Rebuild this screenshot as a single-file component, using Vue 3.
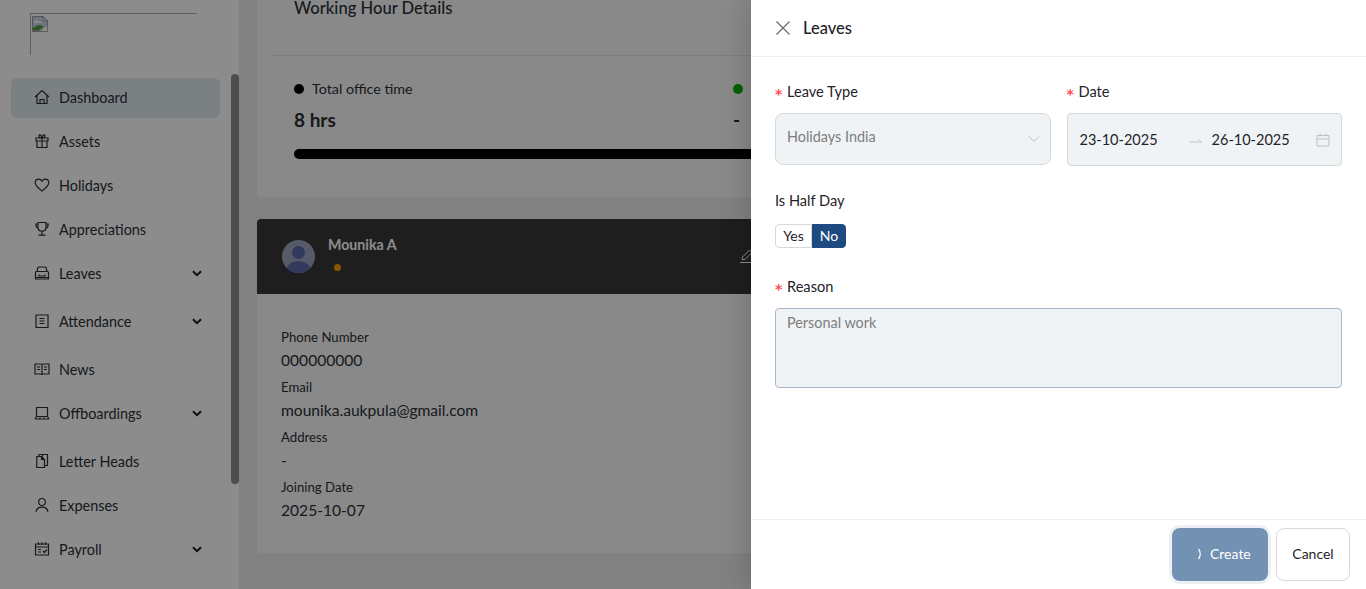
<template>
  <div class="page">
    <aside class="sidebar">
      <div class="logo">
        <svg class="broken" width="16" height="16" viewBox="0 0 16 16">
          <path d="M0.5 0.5H11L15.5 5V15.5H0.5Z" fill="#c6d5e8" stroke="#9a9a9a" />
          <path d="M2 6C3 4 5.5 4 6.5 5.5C8 5 9.5 5.5 10 7H2Z" fill="#fff" />
          <path d="M1 14.5V12L5.5 9.2C7.5 9 10 9.6 11.5 10.2L7 14.5Z" fill="#4e9a3a" />
          <path d="M15.5 8.5L8 15.5H15.5Z" fill="#fff" stroke="#9a9a9a" stroke-width="0.6" />
          <path d="M11 0.5V5H15.5Z" fill="#f2f2f2" stroke="#9a9a9a" />
        </svg>
      </div>
      <nav class="menu">
        <a
          v-for="item in menu"
          :key="item.label"
          class="menu-item"
          :class="{ active: item.active, 'has-sub': item.sub }"
        >
          <svg class="menu-icon" width="16" height="16" viewBox="0 0 16 16">
            <path :d="item.icon" />
          </svg>
          <span class="menu-label">{{ item.label }}</span>
          <svg v-if="item.sub" class="caret" width="10" height="7" viewBox="0 0 10 7">
            <path d="M1 1.2L5 5.2L9 1.2" />
          </svg>
        </a>
      </nav>
      <div class="thumb"></div>
    </aside>

    <main class="content">
      <section class="card hours">
        <h3 class="hours-title">Working Hour Details</h3>
        <div class="hours-line"></div>
        <div class="stats">
          <div class="stat">
            <div class="stat-label"><i class="dot black"></i>Total office time</div>
            <div class="stat-value">8 hrs</div>
          </div>
          <div class="stat">
            <div class="stat-label"><i class="dot green"></i>Working</div>
            <div class="stat-value">-</div>
          </div>
        </div>
        <div class="bar"></div>
      </section>

      <section class="card profile">
        <div class="profile-head">
          <svg class="avatar" width="33" height="33" viewBox="0 0 33 33">
            <defs>
              <clipPath id="avatarClip"><circle cx="16.5" cy="16.5" r="16.5" /></clipPath>
            </defs>
            <circle cx="16.5" cy="16.5" r="16.5" fill="#9ea5bd" />
            <g clip-path="url(#avatarClip)" fill="#5b68ae">
              <circle cx="16.5" cy="12.5" r="6.5" />
              <ellipse cx="16.5" cy="30" rx="12" ry="9" />
            </g>
          </svg>
          <div>
            <div class="profile-name">Mounika A</div>
            <i class="status"></i>
          </div>
          <svg class="edit" width="16" height="16" viewBox="0 0 16 16">
            <path d="M1 14.5H14M3 11.5L3.5 9L10.5 2L13 4.5L6 11.5Z" />
          </svg>
        </div>
        <div class="profile-body">
          <div v-for="row in details" :key="row.label" class="detail">
            <div class="detail-label">{{ row.label }}</div>
            <div class="detail-value">{{ row.value }}</div>
          </div>
        </div>
      </section>
    </main>

    <div class="mask"></div>

    <div class="drawer">
      <header class="drawer-head">
        <svg class="close" width="14" height="14" viewBox="0 0 14 14">
          <path d="M0.5 0.5L13.5 13.5M13.5 0.5L0.5 13.5" />
        </svg>
        <span class="drawer-title">Leaves</span>
      </header>

      <form class="drawer-body" @submit.prevent>
        <div class="form-row">
          <div class="field">
            <label class="label required">Leave Type</label>
            <div class="select">
              <span class="select-text">Holidays India</span>
              <svg width="12" height="8" viewBox="0 0 12 8">
                <path d="M1 1.2L6 6.5L11 1.2" />
              </svg>
            </div>
          </div>
          <div class="field">
            <label class="label required">Date</label>
            <div class="range">
              <span class="range-value">23-10-2025</span>
              <svg class="range-arrow" width="13" height="6" viewBox="0 0 13 6">
                <path d="M0.5 5H12.5L9.5 2.5" />
              </svg>
              <span class="range-value">26-10-2025</span>
              <svg class="range-cal" width="14" height="14" viewBox="0 0 14 14">
                <path d="M1 2.5H13V13H1ZM1 6H13M4 0.5V3.5M10 0.5V3.5" />
              </svg>
            </div>
          </div>
        </div>

        <label class="label half">Is Half Day</label>
        <div class="radio-group">
          <span class="radio yes">Yes</span>
          <span class="radio on">No</span>
        </div>

        <label class="label required reason">Reason</label>
        <div class="textarea">Personal work</div>
      </form>

      <footer class="drawer-foot">
        <button class="btn primary" type="button">
          <svg class="spin" width="14" height="14" viewBox="0 0 14 14">
            <path d="M4.5 2C6.8 4.8 6.8 9.2 4.5 12" />
          </svg>
          Create
        </button>
        <button class="btn cancel" type="button">Cancel</button>
      </footer>
    </div>
  </div>
</template>

<script setup>
const menu = [
  { label: 'Dashboard', active: true, icon: 'M1 8L8 1.5L15 8M3 6.5V14.5H13V6.5M6 14.5V10.5H10V14.5' },
  { label: 'Assets', icon: 'M2 5H14V8H2ZM3 8V14.5H13V8M8 5V14.5M8 5C6 5 4.5 4 5 2.5C5.5 1 7.5 2 8 5C8.5 2 10.5 1 11 2.5C11.5 4 10 5 8 5' },
  { label: 'Holidays', icon: 'M8 14C4 11 1.2 8.8 1.2 5.8C1.2 3.6 2.9 2.2 4.7 2.2C6 2.2 7.3 2.9 8 4.2C8.7 2.9 10 2.2 11.3 2.2C13.1 2.2 14.8 3.6 14.8 5.8C14.8 8.8 12 11 8 14Z' },
  { label: 'Appreciations', icon: 'M4 1.5H12V6.5C12 8.8 10.2 10.2 8 10.2C5.8 10.2 4 8.8 4 6.5ZM4 3H1.8C1.8 5.5 2.6 6.8 4.3 7.4M12 3H14.2C14.2 5.5 13.4 6.8 11.7 7.4M8 10.2V13.8M4.5 14.2H11.5' },
  { label: 'Leaves', sub: true, icon: 'M1.5 7.5C1.5 7 2 6.5 2.5 6.5H13.5C14 6.5 14.5 7 14.5 7.5V14H1.5ZM3 6.5L3.8 2.8C4 2.2 4.4 2 5 2H11C11.6 2 12 2.2 12.2 2.8L13 6.5M1.5 12.5H14.5M5 9.5V11H11V9.5' },
  { label: 'Attendance', sub: true, icon: 'M2 2H14V14.5H2ZM5.5 5.5H10.5M5.5 8H10.5M5.5 10.5H10.5' },
  { label: 'News', icon: 'M1 3H7C7.6 3 8 3.4 8 4V14C8 13.4 7.6 13 7 13H1ZM15 3H9C8.4 3 8 3.4 8 4V14C8 13.4 8.4 13 9 13H15ZM3 6H6M3 8.5H6M10 6H13M10 8.5H13' },
  { label: 'Offboardings', sub: true, icon: 'M2.5 2.5H13.5V11.5H2.5ZM1 14H15M1 14L2.5 11.5M15 14L13.5 11.5M6 14V12.5M10 14V12.5' },
  { label: 'Letter Heads', icon: 'M4 3.5H2.8V14.5H10.5V6.5L7.5 3.5H4ZM7.5 3.5V6.5H10.5M5 3V1.5H13.5V12.5H10.5M8.5 1.5V3.5' },
  { label: 'Expenses', icon: 'M8 8.5C10 8.5 11.3 7 11.3 5C11.3 3 10 1.5 8 1.5C6 1.5 4.7 3 4.7 5C4.7 7 6 8.5 8 8.5ZM2 14.8C2.5 11.8 4.8 10.2 8 10.2C11.2 10.2 13.5 11.8 14 14.8' },
  { label: 'Payroll', sub: true, icon: 'M1.5 3H14.5V14H1.5ZM1.5 6H14.5M4.5 1.2V4M8 1.2V4M11.5 1.2V4M4 8.5H7M4 11H7M9 10L10.5 11.5L13 8.5' },
]

const details = [
  { label: 'Phone Number', value: '000000000' },
  { label: 'Email', value: 'mounika.aukpula@gmail.com' },
  { label: 'Address', value: '-' },
  { label: 'Joining Date', value: '2025-10-07' },
]
</script>

<style>
html,
body {
  margin: 0;
  overflow: hidden;
}
</style>

<style scoped>
.page {
  position: relative;
  display: flex;
  height: 589px;
  overflow: hidden;
  background: #ececec;
  font-family: Lato, "Noto Sans", sans-serif;
  font-size: 14px;
  color: #2b2f36;
}

.sidebar {
  position: relative;
  flex: 0 0 239px;
  box-sizing: border-box;
  padding: 13px 19px 0 11px;
  background: #fff;
}

.logo {
  position: relative;
  box-sizing: border-box;
  width: 167px;
  height: 42px;
  margin: 0 0 23px 19px;
  border-top: 1px solid #b0b0b0;
  border-left: 1px solid #b0b0b0;
}

.broken {
  display: block;
  margin: 2px 0 0 1px;
}

.menu {
  display: flex;
  flex-direction: column;
  gap: 4px;
}

.menu-item {
  display: flex;
  align-items: center;
  box-sizing: border-box;
  height: 40px;
  padding: 0 18px 2px 23px;
  border-radius: 6px;
  font-size: 14.4px;
}

.menu-item.has-sub {
  margin-bottom: 4px;
}

.menu-item.active {
  background: #e0e9ef;
}

.menu-icon {
  flex: none;
  margin-right: 9px;
  fill: none;
  stroke: #2b2f36;
  stroke-width: 1.2;
}

.menu-label {
  flex: 1;
}

.caret {
  fill: none;
  stroke: #1a1a1a;
  stroke-width: 2;
}

.thumb {
  position: absolute;
  top: 74px;
  right: 0;
  width: 8px;
  height: 410px;
  border-radius: 4px;
  background: #8c8c8c;
}

.content {
  flex: 1;
  box-sizing: border-box;
  padding: 0 0 0 18px;
}

.card {
  background: #fafafa;
  border-radius: 4px;
}

.hours {
  box-sizing: border-box;
  height: 197px;
  padding: 0 14px;
}

.hours-title {
  margin: 0;
  padding-left: 23px;
  font-size: 16.6px;
  font-weight: 500;
  line-height: 16px;
}

.hours-line {
  height: 1px;
  margin-top: 39px;
  background: #e4e4e4;
}

.stats {
  display: flex;
  padding: 21px 23px 0;
}

.stat {
  width: 439px;
}

.stat-label {
  display: flex;
  align-items: center;
  height: 22px;
  font-size: 14.3px;
}

.dot {
  width: 10px;
  height: 10px;
  margin: 2px 8px 0 0;
  border-radius: 50%;
}

.dot.black {
  background: #000;
}

.dot.green {
  background: #00b300;
}

.stat-value {
  margin-top: 11px;
  font-size: 19px;
  font-weight: 700;
  line-height: 20px;
}

.bar {
  height: 10px;
  margin: 19px 0 0 23px;
  border-radius: 5px 0 0 5px;
  background: #000;
}

.profile {
  height: 334px;
  margin-top: 22px;
}

.profile-head {
  position: relative;
  display: flex;
  gap: 13px;
  height: 75px;
  box-sizing: border-box;
  padding: 21px 25px 0;
  border-radius: 4px 4px 0 0;
  background: #373737;
}

.avatar {
  flex: none;
}

.profile-name {
  margin-top: -5px;
  color: #fff;
  font-size: 14.2px;
  font-weight: 700;
  line-height: 20px;
}

.status {
  display: block;
  width: 7px;
  height: 7px;
  margin: 9px 0 0 6px;
  border-radius: 50%;
  background: #f59e00;
}

.edit {
  position: absolute;
  top: 29px;
  left: 482px;
  fill: none;
  stroke: #fff;
  stroke-width: 1;
}

.profile-body {
  padding: 34px 24px 0;
}

.detail {
  height: 50px;
}

.detail-label {
  height: 20px;
  font-size: 13.2px;
  line-height: 18px;
}

.detail-value {
  font-size: 15.6px;
  line-height: 24px;
}

.mask {
  position: absolute;
  inset: 0;
  background: rgba(0, 0, 0, 0.45);
}

.drawer {
  position: absolute;
  top: 0;
  right: 0;
  bottom: 0;
  display: flex;
  flex-direction: column;
  width: 615px;
  background: #fff;
  box-shadow: -6px 0 16px rgba(0, 0, 0, 0.08), -9px 0 28px rgba(0, 0, 0, 0.05);
  color: #1f2329;
}

.drawer-head {
  display: flex;
  align-items: center;
  flex: 0 0 56px;
  padding-left: 25px;
  border-bottom: 1px solid #f0f0f0;
}

.close {
  margin-right: 13px;
  fill: none;
  stroke: #6b6b6b;
  stroke-width: 1.2;
}

.drawer-title {
  margin-bottom: 1px;
  font-size: 16.5px;
  font-weight: 500;
}

.drawer-body {
  flex: 1;
  padding: 23px 24px 0;
}

.form-row {
  display: flex;
  gap: 16px;
}

.field {
  flex: 1;
}

.label {
  display: block;
  height: 22px;
  line-height: 24px;
  font-size: 14.6px;
}

.label.required::before {
  content: "*";
  display: inline-block;
  width: 12px;
  color: #ff4d4f;
  font-family: "DejaVu Sans", sans-serif;
  font-size: 14px;
  font-weight: 700;
  line-height: 1;
  vertical-align: -2px;
}

.select,
.range {
  display: flex;
  align-items: center;
  box-sizing: border-box;
  margin-top: 11px;
  background: #eff3f6;
  border: 1px solid #d9d9d9;
}

.select {
  justify-content: space-between;
  height: 52px;
  padding: 0 10px 0 11px;
  border-radius: 8px;
  color: #7d7d7d;
  font-size: 14.4px;
}

.select-text {
  margin-bottom: 6px;
}

.select svg {
  fill: none;
  stroke: #c0c0c0;
}

.range {
  height: 53px;
  padding: 0 11px 0 12px;
  border-radius: 4px;
  font-size: 14.5px;
}

.range-value {
  flex: none;
}

.range-arrow {
  margin: 0 10px 0 31px;
  fill: none;
  stroke: #bfbfbf;
}

.range-cal {
  margin-left: auto;
  fill: none;
  stroke: #bfbfbf;
}

.half {
  margin-top: 23px;
}

.radio-group {
  display: flex;
  margin-top: 13px;
}

.radio {
  box-sizing: border-box;
  width: 34px;
  height: 24px;
  border: 1px solid #d9d9d9;
  line-height: 22px;
  text-align: center;
  border-radius: 0 4px 4px 0;
}

.radio.yes {
  width: 37px;
  border-radius: 4px 0 0 4px;
}

.radio.on {
  border-color: #1d4a80;
  background: #1d4a80;
  color: #fff;
}

.reason {
  margin-top: 27px;
}

.textarea {
  box-sizing: border-box;
  height: 80px;
  margin-top: 11px;
  padding: 4px 11px;
  border: 1px solid #a9b7c9;
  border-radius: 4px;
  background: #eff3f6;
  color: #7d7d7d;
  font-size: 14.4px;
  line-height: 20px;
}

.drawer-foot {
  display: flex;
  justify-content: flex-end;
  gap: 8px;
  flex: 0 0 70px;
  box-sizing: border-box;
  padding: 8px 16px 0;
  border-top: 1px solid #f0f0f0;
}

.btn {
  height: 53px;
  padding: 0 0 2px;
  border: 1px solid #d9d9d9;
  border-radius: 8px;
  background: #fff;
  color: #1f2329;
  font: inherit;
}

.btn.cancel {
  width: 74px;
}

.btn.primary {
  display: flex;
  align-items: center;
  width: 96px;
  padding: 0 0 2px 22px;
  border: none;
  background: #7391b2;
  box-shadow: 0 0 0 3px #edf1f6;
  color: #fff;
}

.spin {
  margin-right: 2px;
  fill: none;
  stroke: #fff;
  stroke-width: 1.2;
}
</style>
